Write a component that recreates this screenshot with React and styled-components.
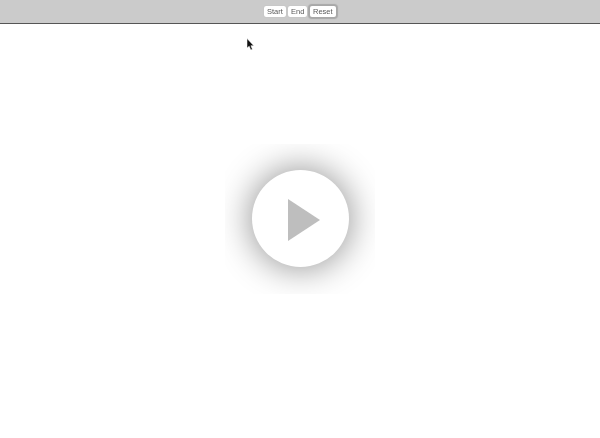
import React from "react";
import styled, { createGlobalStyle } from "styled-components";

const GlobalStyle = createGlobalStyle`
  html, body {
    margin: 0;
    height: 100%;
    background: #fff;
    overflow: hidden;
  }
`;

const Page = styled.div`
  position: relative;
  width: 600px;
  height: 438px;
  background: #fff;
`;

const Toolbar = styled.div`
  box-sizing: border-box;
  height: 24px;
  background: #cbcbcb;
  border-bottom: 1px solid #555;
  display: flex;
  justify-content: center;
  align-items: center;
  gap: 2px;
  padding-bottom: 1px;
`;

const Button = styled.button`
  box-sizing: border-box;
  height: 11px;
  padding: 0 3px;
  margin: 0;
  border: none;
  border-radius: 2px;
  background: #fff;
  color: #5a5a5a;
  font-family: "Liberation Sans", Arial, sans-serif;
  font-size: 7.5px;
  line-height: 11px;
  will-change: transform;
  box-shadow: ${(props) =>
    props.$focused ? "0 0 1px 2px #a8a8a8" : "0 0 1px #aaa"};
  margin-left: ${(props) => (props.$focused ? "1px" : "0")};
`;

const Stage = styled.div`
  display: flex;
  justify-content: center;
  padding-top: 120px;
`;

const PlayBox = styled.div`
  width: 150px;
  height: 150px;
  overflow: hidden;
  display: flex;
  align-items: center;
  justify-content: center;
`;

const PlayCircle = styled.div`
  width: 97px;
  height: 97px;
  margin-top: -1px;
  border-radius: 50%;
  background: #fff;
  box-shadow: 0 0 34px 2px rgba(0, 0, 0, 0.42);
  display: flex;
  align-items: center;
  justify-content: center;
`;

const PlayIcon = styled.svg`
  width: 32px;
  height: 42px;
  margin-left: 8px;
  margin-top: 3px;
`;

const Cursor = styled.svg`
  position: absolute;
  left: 246px;
  top: 38px;
  width: 9px;
  height: 13px;
`;

export default function App() {
  return (
    <Page>
      <GlobalStyle />
      <Toolbar>
        <Button>Start</Button>
        <Button>End</Button>
        <Button $focused>Reset</Button>
      </Toolbar>
      <Stage>
        <PlayBox>
          <PlayCircle>
            <PlayIcon viewBox="0 0 32 42">
              <polygon points="0,0 32,21 0,42" fill="#bebebe" />
            </PlayIcon>
          </PlayCircle>
        </PlayBox>
      </Stage>
      <Cursor viewBox="0 0 9 13">
        <path d="M1 0.5V10L3.2 8.2L4.8 12L6.4 11.3L4.9 7.7H7.8Z" fill="#111" stroke="#fff" strokeWidth="0.5" />
      </Cursor>
    </Page>
  );
}
